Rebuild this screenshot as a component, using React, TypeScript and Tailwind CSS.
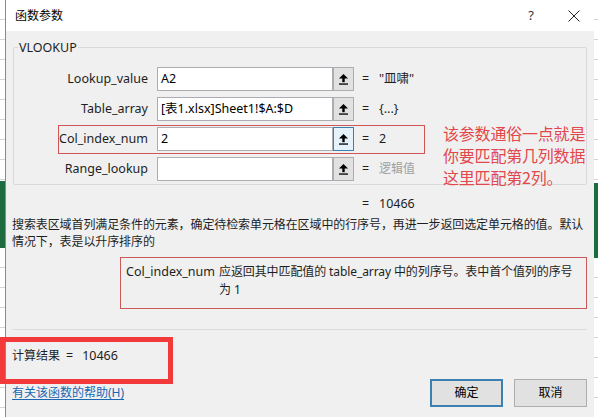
import React from "react";

const font = "font-['Noto_Sans','Noto_Sans_CJK_SC',sans-serif]";

function RefIcon() {
  return (
    <svg width="9" height="11" viewBox="0 0 9 11" className="block">
      <polygon points="4.5,0 0,4.5 9,4.5" fill="#000" />
      <rect x="3.3" y="4" width="2.4" height="4.2" fill="#000" />
      <rect x="0" y="9.4" width="9" height="1.3" fill="#000" />
    </svg>
  );
}

type Row = {
  label: string;
  value: string;
  result: string;
  muted?: boolean;
  focused?: boolean;
};

const rows: Row[] = [
  { label: "Lookup_value", value: "A2", result: "\"皿啸\"" },
  { label: "Table_array", value: "[表1.xlsx]Sheet1!$A:$D", result: "{...}" },
  { label: "Col_index_num", value: "2", result: "2", focused: true },
  { label: "Range_lookup", value: "", result: "逻辑值", muted: true },
];

function ArgRow({ row }: { row: Row }) {
  return (
    <div className="flex items-center h-[24px]">
      <div className="w-[134px] text-right text-[12.5px] text-[#1e1e1e]">{row.label}</div>
      <div className="ml-[9px] w-[176px] h-[24px] bg-white border border-[#abadb3] flex items-center px-[3px] text-[12.5px] text-black">
        {row.value}
      </div>
      <div
        className={
          row.focused
            ? "w-[21px] h-[24px] flex items-center justify-center bg-[#e5f1fb] border border-[#3c7fb1]"
            : "w-[21px] h-[24px] flex items-center justify-center bg-[#e1e1e1] border border-[#adadad]"
        }
      >
        <RefIcon />
      </div>
      <span className="ml-[8px] w-[8px] text-[12.5px] text-[#1e1e1e]">=</span>
      <span className={row.muted ? "ml-[9px] text-[12px] text-[#a0a0a0]" : "ml-[9px] text-[12.5px] text-[#1e1e1e]"}>
        {row.result}
      </span>
    </div>
  );
}

function SheetStrip({ greenTop, greenHeight, width }: { greenTop: number; greenHeight: number; width: string }) {
  return (
    <div className={`${width} h-full flex flex-col`}>
      <div
        className="bg-[repeating-linear-gradient(to_bottom,#ffffff_0px,#ffffff_19px,#d4d4d4_19px,#d4d4d4_20px)]"
        style={{ height: greenTop }}
      />
      <div className="bg-[#1e6b3f]" style={{ height: greenHeight }} />
      <div className="flex-1 bg-[repeating-linear-gradient(to_bottom,#ffffff_0px,#ffffff_19px,#d4d4d4_19px,#d4d4d4_20px)]" />
    </div>
  );
}

export default function App() {
  return (
    <div className={`relative w-[598px] h-[417px] overflow-hidden flex ${font}`}>
      <SheetStrip width="w-[5px]" greenTop={181} greenHeight={67} />

      {/* Dialog */}
      <div className="w-[589px] h-full flex flex-col bg-[#f0f0f0] border-l border-[#8a8a8a]">
        {/* Title bar */}
        <div className="h-[31px] bg-white flex items-center pl-[9px] pr-[14px]">
          <span className="text-[12px] text-black">函数参数</span>
          <span className="ml-auto text-[13px] text-[#333]">?</span>
          <svg width="12" height="12" viewBox="0 0 12 12" className="ml-[34px]">
            <path d="M0.5 0.5 L11.5 11.5 M11.5 0.5 L0.5 11.5" stroke="#222" strokeWidth="1" />
          </svg>
        </div>

        {/* Argument group */}
        <div className="relative mt-[16px] ml-[7px] mr-[7px] border border-[#d9d9d9] rounded-[2px] pt-[19px] pb-[3px] flex flex-col gap-[6px]">
          <span className="absolute -top-[9px] left-[4px] px-[1px] bg-[#f0f0f0] text-[12.5px] text-[#1e1e1e] leading-[17px]">
            VLOOKUP
          </span>
          {rows.map((r) => (
            <ArgRow key={r.label} row={r} />
          ))}
        </div>

        {/* Formula result */}
        <div className="mt-[10px] h-[18px] flex items-center pl-[356px] text-[12.5px] text-[#1e1e1e]">
          <span className="w-[8px]">=</span>
          <span className="ml-[9px]">10466</span>
        </div>

        {/* Function description */}
        <p className="mt-[3px] px-[6px] text-[12px] leading-[17px] text-[#1e1e1e] tracking-[-0.1px]">
          搜索表区域首列满足条件的元素，确定待检索单元格在区域中的行序号，再进一步返回选定单元格的值。默认
          <br />
          情况下，表是以升序排序的
        </p>

        {/* Argument description */}
        <div className="mt-[7px] ml-[114px] mr-[7px] h-[52px] border border-[#c85a5a] pt-[5px] pl-[5px] flex text-[12px] leading-[18px] text-[#1e1e1e]">
          <div className="w-[93px] shrink-0 text-[12.5px]">Col_index_num</div>
          <div className="flex-1 whitespace-nowrap tracking-[-0.1px]">
            应返回其中匹配值的 table_array 中的列序号。表中首个值列的序号
            <br />
            为 1
          </div>
        </div>

        <div className="mt-[20px] ml-[6px] mr-[7px] h-px bg-[#dcdcdc]" />

        <div className="mt-[17px] pl-[6px] h-[18px] flex items-center text-[12.5px] text-[#1e1e1e]">
          <span className="text-[12px]">计算结果</span>
          <span className="ml-[6px]">=</span>
          <span className="ml-[9px]">10466</span>
        </div>

        <div className="mt-[14px] pl-[6px] pr-[7px] flex items-center">
          <a className="text-[12px] text-[#1a66b3] underline underline-offset-2">有关该函数的帮助(H)</a>
          <button className="ml-auto w-[73px] h-[28px] bg-[#e1e1e1] border-2 border-[#3c7fb1] text-[12px] text-black">
            确定
          </button>
          <button className="ml-[11px] w-[73px] h-[28px] bg-[#e1e1e1] border border-[#adadad] text-[12px] text-black">
            取消
          </button>
        </div>
      </div>

      <SheetStrip width="flex-1" greenTop={183} greenHeight={75} />

      {/* Annotations */}
      <div className="absolute left-[58px] top-[125px] w-[367px] h-[29px] border-[1.5px] border-[#d25555] pointer-events-none" />
      <div className="absolute left-[443px] top-[122px] text-[16px] leading-[22px] text-[#e2474b] tracking-[-0.2px] font-['Noto_Sans_CJK_SC',sans-serif]">
        该参数通俗一点就是
        <br />
        你要匹配第几列数据
        <br />
        这里匹配第2列。
      </div>
      <div className="absolute left-0 top-[337px] w-[173px] h-[47px] border-[5px] border-[#f23a3a] pointer-events-none" />
    </div>
  );
}
